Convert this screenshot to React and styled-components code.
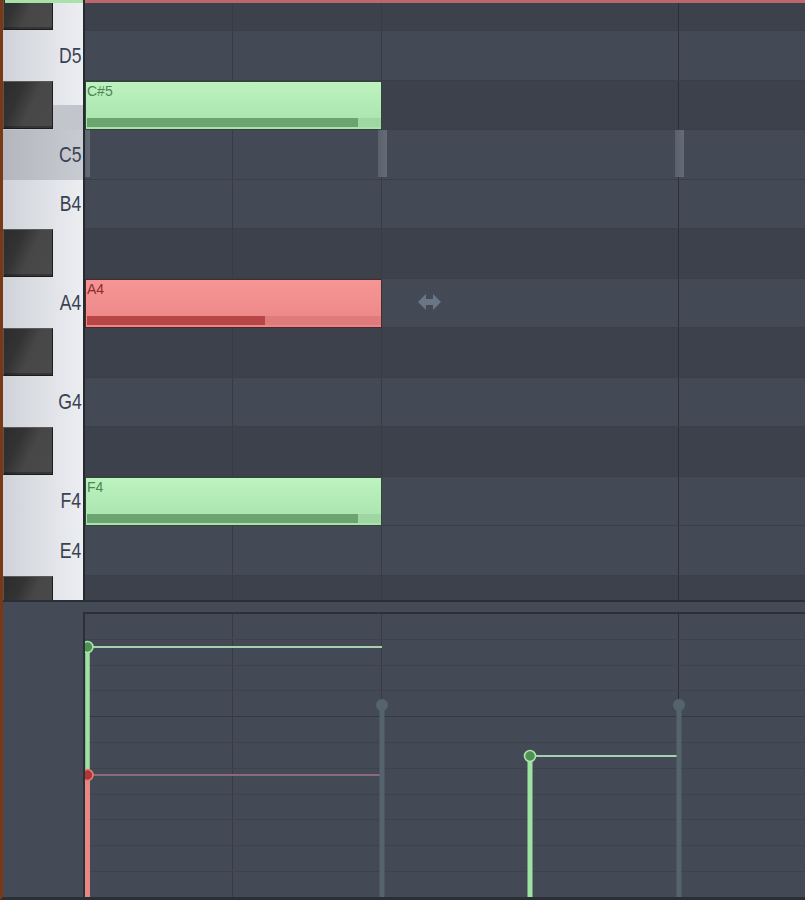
import React from 'react';
import styled, { createGlobalStyle } from 'styled-components';

const ROW = 49.5;
const OFFSET = -18.5;
const BEAT = 148.5;

const Global = createGlobalStyle`
  html, body { margin: 0; padding: 0; background: #454b55; overflow: hidden; }
  #root { width: 805px; height: 900px; }
`;

const Frame = styled.div`
  width: 805px;
  height: 900px;
  box-sizing: border-box;
  display: flex;
  flex-direction: column;
  background: #454b56;
  border-left: 3px solid #7a3817;
  border-bottom: 3px solid #2a2e35;
  overflow: hidden;
`;

const Top = styled.div`
  display: flex;
  height: 600px;
  flex: none;
  overflow: hidden;
`;

const KeyColumn = styled.div`
  position: relative;
  width: 80px;
  flex: none;
  overflow: hidden;
  border-right: 2px solid #252930;
  background: linear-gradient(to right, #cdd0d6, #eceef2);
`;

const Stack = styled.div`
  display: flex;
  flex-direction: column;
  margin-top: ${OFFSET}px;
`;

const whiteBg = 'linear-gradient(to right, #cfd2d8, #eceef2)';
const tintBg = 'linear-gradient(to right, #b3b6bc, #c8cbd1)';

const KeyRow = styled.div`
  height: ${ROW}px;
  flex: none;
  display: flex;
  align-items: center;
  justify-content: space-between;
  box-sizing: border-box;
  background: ${(p) =>
    p.$tint === 'full'
      ? tintBg
      : p.$tint === 'half'
      ? `linear-gradient(to bottom, transparent 50%, #c2c5cb 50%), ${whiteBg}`
      : whiteBg};
`;

const BlackKey = styled.div`
  align-self: flex-start;
  width: 50px;
  height: 48px;
  box-sizing: border-box;
  background: linear-gradient(115deg, #2c2c2c 0%, #333 30%, #474747 55%, #4a4a4a 100%);
  border-top: 1px solid #5a5a5a;
  border-left: 1px solid #555;
  border-right: 1px solid #1e1e1e;
  border-bottom: 1px solid #1c1c1c;
  box-shadow: inset 0 -2px 0 rgba(0, 0, 0, 0.25);
`;

const KeyLabel = styled.span`
  display: inline-block;
  margin-left: auto;
  padding-right: 2px;
  font-family: 'Liberation Sans', Arial, sans-serif;
  font-size: 22px;
  line-height: 1;
  color: #3a4251;
  transform: scaleX(0.8);
  transform-origin: right center;
`;

const KeyHighlight = styled.div`
  position: absolute;
  top: 0;
  left: 2px;
  right: 0;
  height: 3px;
  background: #a8e2a9;
`;

const Grid = styled.div`
  position: relative;
  flex: 1;
  overflow: hidden;
`;

const gridLines = `
  linear-gradient(to right, transparent 593px, #2a2e36 593px, #2a2e36 594px, transparent 594px),
  repeating-linear-gradient(to right, transparent 0, transparent ${BEAT - 1}px, #373b44 ${BEAT - 1}px, #373b44 ${BEAT}px)
`;

const GridRow = styled.div`
  height: ${ROW}px;
  flex: none;
  box-sizing: border-box;
  border-bottom: 1px solid #393e47;
  background: ${gridLines};
  background-color: ${(p) => (p.$dark ? '#3c414b' : '#434955')};
`;

const TimeMarker = styled.div`
  position: absolute;
  top: 0;
  left: 0;
  right: 0;
  height: 3px;
  background: #bd666c;
  z-index: 3;
`;

const palette = {
  green: {
    body: 'linear-gradient(to bottom, #bcf3bf, #a9e1ac)',
    text: '#4d8553',
    track: '#a0d6a2',
    fill: '#6ba46e',
    border: '#33443a',
  },
  red: {
    body: 'linear-gradient(to bottom, #f69595, #ec8686)',
    text: '#8b2c2c',
    track: '#e07b7b',
    fill: '#b84646',
    border: '#4a2a2e',
  },
};

const NoteBox = styled.div`
  position: absolute;
  left: 0;
  width: 297px;
  height: ${ROW}px;
  box-sizing: border-box;
  display: flex;
  flex-direction: column;
  justify-content: space-between;
  background: ${(p) => palette[p.$c].body};
  border: 1px solid ${(p) => palette[p.$c].border};
  z-index: 2;
`;

const NoteLabel = styled.span`
  padding: 2px 0 0 1px;
  font-family: 'Liberation Sans', Arial, sans-serif;
  font-size: 14px;
  line-height: 14px;
  color: ${(p) => palette[p.$c].text};
`;

const VelTrack = styled.div`
  height: 9px;
  margin: 0 0 2px 1px;
  background: ${(p) => palette[p.$c].track};
`;

const VelFill = styled.div`
  height: 100%;
  background: ${(p) => palette[p.$c].fill};
`;

const GhostMark = styled.div`
  position: absolute;
  width: 9px;
  height: 47px;
  background: linear-gradient(to right, #5a616d, #656c78);
  z-index: 1;
`;

const ArrowIcon = styled.svg`
  position: absolute;
  left: 333px;
  top: 293px;
  z-index: 1;
`;

const Bottom = styled.div`
  flex: 1;
  display: flex;
  border-top: 2px solid #2a2e35;
`;

const SidePanel = styled.div`
  width: 80px;
  flex: none;
  background: #454b56;
`;

const EventCol = styled.div`
  flex: 1;
  display: flex;
  flex-direction: column;
  padding-top: 10px;
`;

const EventArea = styled.div`
  position: relative;
  flex: 1;
  border-top: 2px solid #2b2f37;
  border-left: 2px solid #2b2f37;
  background:
    linear-gradient(to bottom, transparent 102.2px, #353a42 102.2px, #353a42 103.2px, transparent 103.2px),
    repeating-linear-gradient(to bottom, transparent 0, transparent 24.8px, #3d424b 24.8px, #3d424b 25.8px),
    ${gridLines};
  background-color: #444a55;
  overflow: hidden;
`;

const Chart = styled.svg`
  position: absolute;
  inset: 0;
  width: 100%;
  height: 100%;
`;

const KEYS = [
  { n: 'D#5', black: true },
  { n: 'D5' },
  { n: 'C#5', black: true, tint: 'half' },
  { n: 'C5', tint: 'full' },
  { n: 'B4' },
  { n: 'A#4', black: true },
  { n: 'A4' },
  { n: 'G#4', black: true },
  { n: 'G4' },
  { n: 'F#4', black: true },
  { n: 'F4' },
  { n: 'E4' },
  { n: 'D#4', black: true },
];

const NOTES = [
  { n: 'C#5', row: 2, c: 'green', vel: 0.921 },
  { n: 'A4', row: 6, c: 'red', vel: 0.605 },
  { n: 'F4', row: 10, c: 'green', vel: 0.921 },
];

const GHOSTS = [0, 297, 594];

function Stem({ x, y, color, width = 5, r = 5.5, fill, stroke, h = 300 }) {
  return (
    <g>
      <rect x={x - width / 2} y={y} width={width} height={h - y} fill={color} />
      <circle cx={x} cy={y} r={r} fill={fill || color} stroke={stroke || 'none'} strokeWidth={stroke ? 1.6 : 0} />
    </g>
  );
}

export default function App() {
  return (
    <>
      <Global />
      <Frame>
        <Top>
          <KeyColumn>
            <Stack>
              {KEYS.map((k) => (
                <KeyRow key={k.n} $tint={k.tint}>
                  {k.black ? <BlackKey /> : <KeyLabel>{k.n}</KeyLabel>}
                </KeyRow>
              ))}
            </Stack>
            <KeyHighlight />
          </KeyColumn>
          <Grid>
            <TimeMarker />
            <Stack>
              {KEYS.map((k) => (
                <GridRow key={k.n} $dark={k.black} />
              ))}
            </Stack>
            {GHOSTS.map((gx) => (
              <GhostMark key={gx} style={{ left: gx - 4.5, top: 3 * ROW + OFFSET }} />
            ))}
            {NOTES.map((n) => (
              <NoteBox key={n.n} $c={n.c} style={{ top: n.row * ROW + OFFSET }}>
                <NoteLabel $c={n.c}>{n.n}</NoteLabel>
                <VelTrack $c={n.c}>
                  <VelFill $c={n.c} style={{ width: `${n.vel * 100}%` }} />
                </VelTrack>
              </NoteBox>
            ))}
            <ArrowIcon width="23" height="18" viewBox="0 0 23 18">
              <polygon
                points="0,9 8,1 8,6 15,6 15,1 23,9 15,17 15,12 8,12 8,17"
                fill="#687685"
              />
            </ArrowIcon>
          </Grid>
        </Top>
        <Bottom>
          <SidePanel />
          <EventCol>
            <EventArea>
              <Chart>
                <line x1="2" y1="33" x2="297" y2="33" stroke="#a6d0ae" strokeWidth="2" />
                <line x1="2" y1="161" x2="297" y2="161" stroke="#8d6879" strokeWidth="2" />
                <line x1="445" y1="142" x2="594" y2="142" stroke="#a6d0ae" strokeWidth="2" />
                <Stem x={297} y={91} color="#55636e" r={6} />
                <Stem x={594} y={91} color="#55636e" r={6} />
                <Stem x={445} y={142} color="#9fe3a2" fill="#4f9153" stroke="#a6e6a9" />
                <Stem x={2.5} y={33} width={4.5} color="#9fe3a2" fill="#4f9153" stroke="#a6e6a9" />
                <Stem x={2.5} y={161} width={4.5} color="#ef8282" fill="#b03636" stroke="#e47b7b" />
              </Chart>
            </EventArea>
          </EventCol>
        </Bottom>
      </Frame>
    </>
  );
}
